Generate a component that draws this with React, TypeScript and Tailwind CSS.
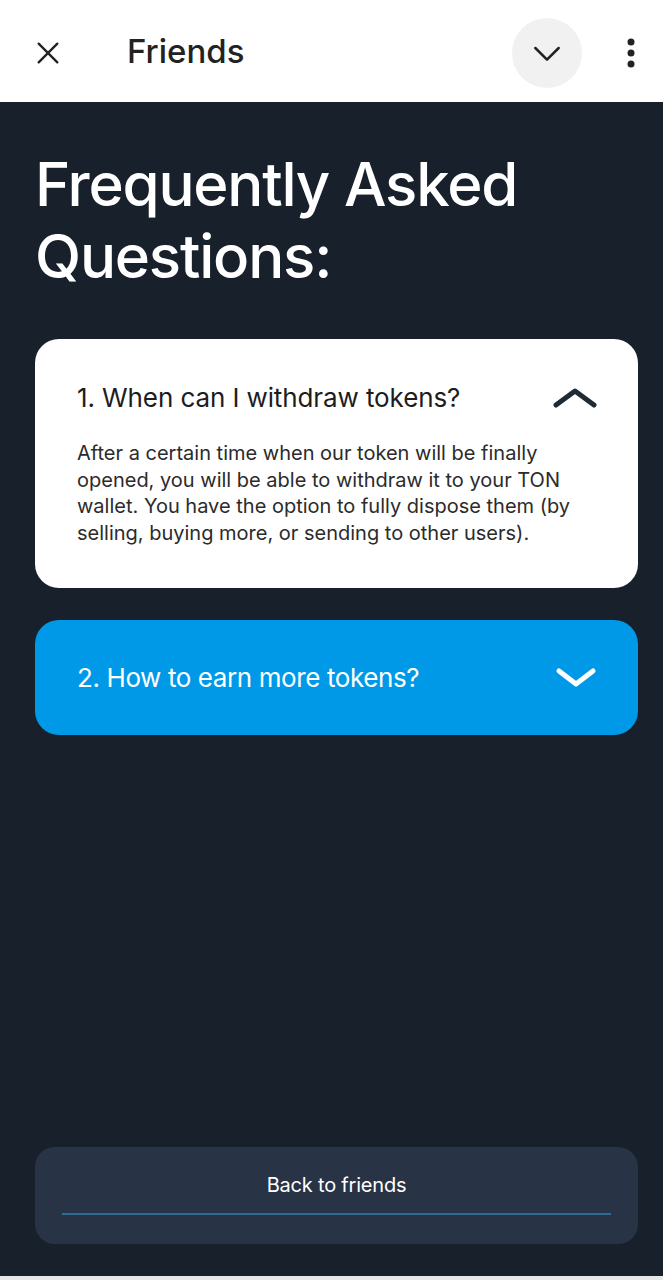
import React from "react";

export default function App() {
  return (
    <div className="w-[663px] h-[1280px] flex flex-col bg-[#e6e8e8]" style={{ fontFamily: "Inter, Roboto, 'Liberation Sans', sans-serif" }}>
      {/* Header */}
      <div className="h-[102px] bg-white flex items-center shrink-0">
        <div className="w-[96px] flex items-center justify-center pt-[4px]">
          <svg width="28" height="28" viewBox="0 0 24 24" fill="none" stroke="#222" strokeWidth="2" strokeLinecap="round">
            <path d="M4 4L20 20M20 4L4 20" />
          </svg>
        </div>
        <div className="ml-[31px] text-[33px] text-[#222] font-medium tracking-[0px] pt-[1px]">Friends</div>
        <div className="ml-auto w-[70px] h-[70px] rounded-full bg-[#f1f1f1] flex items-center justify-center mt-[4px]">
          <svg width="40" height="40" viewBox="0 0 24 24" fill="none" stroke="#222" strokeWidth="1.5" strokeLinecap="round" strokeLinejoin="round">
            <path d="M5 9l7 7 7-7" />
          </svg>
        </div>
        <div className="w-[81px] flex items-center justify-center pl-[17px] pt-[4px]">
          <svg width="10" height="30" viewBox="0 0 10 30" fill="#222">
            <circle cx="5" cy="4" r="3.5" />
            <circle cx="5" cy="15" r="3.5" />
            <circle cx="5" cy="26" r="3.5" />
          </svg>
        </div>
      </div>

      {/* Main */}
      <div className="h-[1174px] bg-[#18202b] flex flex-col pl-[35px] pr-[25px] pt-[46px] pb-[32px] shrink-0">
        <h1 className="text-[60px] leading-[72px] text-white font-medium tracking-[-1.2px]">
          Frequently Asked<br />Questions:
        </h1>

        <div className="mt-[47px] bg-white rounded-[24px] pl-[42px] pr-[40px] pt-[42px] pb-[42px]">
          <div className="flex items-center justify-between">
            <div className="text-[26px] text-[#1d1d1d] tracking-[-0.1px] leading-[34px]">1. When can I withdraw tokens?</div>
            <svg width="46" height="24" viewBox="0 0 46 24" fill="none" stroke="#1f2a33" strokeWidth="5" strokeLinecap="round" strokeLinejoin="round">
              <path d="M4 19L23 5L42 19" />
            </svg>
          </div>
          <p className="mt-[25px] text-[20px] leading-[26.5px] text-[#2b2b2b] tracking-[0px]">
            After a certain time when our token will be finally opened, you will be able to withdraw it to your TON wallet. You have the option to fully dispose them (by selling, buying more, or sending to other users).
          </p>
        </div>

        <div className="mt-[32px] h-[115px] bg-[#0099e8] rounded-[24px] pl-[42px] pr-[40px] flex items-center justify-between">
          <div className="text-[26px] text-white tracking-[-0.4px]">2. How to earn more tokens?</div>
          <svg width="44" height="24" viewBox="0 0 44 24" fill="none" stroke="#ffffff" strokeWidth="5" strokeLinecap="round" strokeLinejoin="round">
            <path d="M5 5L22 18L39 5" />
          </svg>
        </div>

        <div className="mt-auto h-[97px] bg-[#283446] rounded-[20px] px-[27px] flex flex-col items-center pt-[25px]">
          <div className="text-[20px] text-white tracking-[-0.2px] leading-[26px]">Back to friends</div>
          <div className="mt-[15px] w-full h-[2px] bg-[#2b6c98]" />
        </div>
      </div>
    </div>
  );
}
